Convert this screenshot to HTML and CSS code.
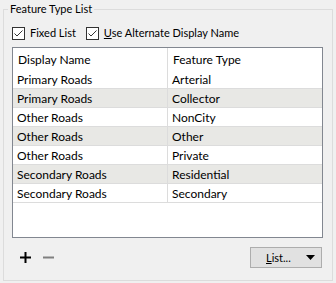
FILE: index.html
```html
<!DOCTYPE html>
<html lang="en">
<head>
    <meta charset="UTF-8">
    <title>Feature Type List</title>
    <link rel="stylesheet" href="styles.css">
</head>
<body>
    <fieldset class="group">
        <legend class="group-title">Feature Type List</legend>

        <div class="options">
            <label class="check">
                <span class="box">
                    <svg width="11" height="11" viewBox="0 0 11 11"><path d="M1.5 5.5 L4 8 L9.5 2.5" fill="none" stroke="#333" stroke-width="1"/></svg>
                </span>
                Fixed List
            </label>
            <label class="check">
                <span class="box">
                    <svg width="11" height="11" viewBox="0 0 11 11"><path d="M1.5 5.5 L4 8 L9.5 2.5" fill="none" stroke="#333" stroke-width="1"/></svg>
                </span>
                <span><u>U</u>se Alternate Display Name</span>
            </label>
        </div>

        <div class="grid">
            <table class="list">
                <thead>
                    <tr>
                        <th>Display Name</th>
                        <th>Feature Type</th>
                    </tr>
                </thead>
                <tbody>
                    <tr><td>Primary Roads</td><td>Arterial</td></tr>
                    <tr class="alt"><td>Primary Roads</td><td>Collector</td></tr>
                    <tr><td>Other Roads</td><td>NonCity</td></tr>
                    <tr class="alt"><td>Other Roads</td><td>Other</td></tr>
                    <tr><td>Other Roads</td><td>Private</td></tr>
                    <tr class="alt"><td>Secondary Roads</td><td>Residential</td></tr>
                    <tr><td>Secondary Roads</td><td>Secondary</td></tr>
                </tbody>
            </table>
        </div>

        <div class="footer">
            <div class="tools">
                <svg class="tool" width="11" height="11" viewBox="0 0 11 11"><path d="M0 5.5 H11 M5.5 0 V11" stroke="#000" stroke-width="2"/></svg>
                <svg class="tool" width="11" height="11" viewBox="0 0 11 11"><path d="M0 5.5 H11" stroke="#808080" stroke-width="2"/></svg>
            </div>
            <button class="menu-button">
                <span class="label"><u>L</u>ist...</span>
                <svg width="9" height="5" viewBox="0 0 9 5"><path d="M0 0 H9 L4.5 5 Z" fill="#000"/></svg>
            </button>
        </div>
    </fieldset>
</body>
</html>
```

FILE: styles.css
```css
body {
    margin: 0;
    background-color: #f0f0f0;
    font-family: Lato, "Noto Sans", sans-serif;
    font-size: 11px;
    color: #000;
}

.group {
    box-sizing: border-box;
    margin: 1px 3px 0 3px;
    padding: 0 9px 0 8px;
    width: 330px;
    height: 280px;
    border: 1px solid #dcdcdc;
}

.group-title {
    padding: 0 2px;
    margin-left: -4px;
    line-height: 16px;
}

.options {
    display: flex;
    gap: 10px;
    margin-top: 8px;
}

.check {
    display: flex;
    align-items: center;
    gap: 5px;
    line-height: 16px;
}

.box {
    width: 11px;
    height: 11px;
    border: 1px solid #333;
    background-color: #fff;
    display: flex;
}

/* list grid */
.grid {
    margin-top: 6px;
    height: 189px;
    border: 1px solid #828790;
    background-color: #fff;
    font-size: 12px;
}

.list {
    width: 100%;
    border-collapse: collapse;
}

.list th {
    font-weight: normal;
    text-align: left;
    height: 22px;
    padding: 0 0 0 5px;
}

.list td {
    height: 18px;
    padding: 0 0 0 4px;
    border-bottom: 1px solid #dcdcdc;
}

.list th:first-child,
.list td:first-child {
    width: 149px;
    border-right: 1px solid #dcdcdc;
}

.list tr.alt td {
    background-color: #e8e8e5;
}

/* bottom bar */
.footer {
    display: flex;
    justify-content: space-between;
    align-items: center;
    margin-top: 9px;
}

.tools {
    display: flex;
    gap: 12px;
    padding-left: 8px;
}

.menu-button {
    width: 72px;
    height: 21px;
    margin-right: 1px;
    background-color: #e1e1e1;
    border: 1px solid #adadad;
    font-family: inherit;
    font-size: 11px;
    display: flex;
    align-items: center;
    justify-content: space-between;
    padding: 0 6px 0 15px;
}
```
